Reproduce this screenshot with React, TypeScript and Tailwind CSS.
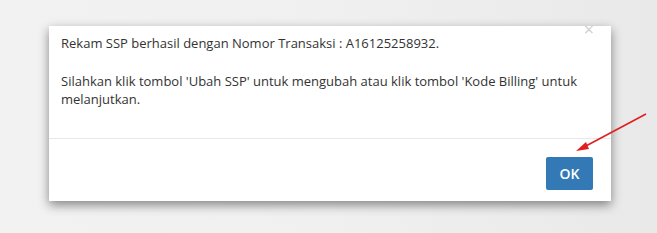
export default function App() {
  return (
    <div className="relative h-[233px] w-[657px] overflow-hidden bg-gradient-to-r from-[#f2f2f2] via-[#f0f0f0] to-[#e9e9e9] pl-[49px] pt-[26px] font-['Open_Sans',sans-serif]">
      <div className="relative flex h-[175px] w-[562px] flex-col bg-white shadow-[0_4px_10px_rgba(0,0,0,0.45)]">
        <button className="absolute right-[17px] top-[-6px] text-[18px] leading-none text-[#cfcfcf]">×</button>
        <div className="h-[113px] border-b border-[#e8e8e8] px-[12px] pt-[8px] text-[13px] leading-[18px] text-[#333]">
          <p>Rekam SSP berhasil dengan Nomor Transaksi : A16125258932.</p>
          <p className="mt-[20px]">
            Silahkan klik tombol 'Ubah SSP' untuk mengubah atau klik tombol 'Kode Billing' untuk melanjutkan.
          </p>
        </div>
        <div className="flex flex-1 justify-end pr-[18px] pt-[18px]">
          <button className="h-[33px] w-[47px] rounded-[2px] bg-[#3379b5] text-[14px] font-semibold text-white">OK</button>
        </div>
      </div>
      <svg className="absolute left-0 top-0" width="657" height="233" viewBox="0 0 657 233">
        <line x1="646" y1="114" x2="584" y2="147" stroke="#e0201f" strokeWidth="1.6" />
        <polygon points="576,151 586,142 589,149" fill="#e0201f" />
      </svg>
    </div>
  )
}
